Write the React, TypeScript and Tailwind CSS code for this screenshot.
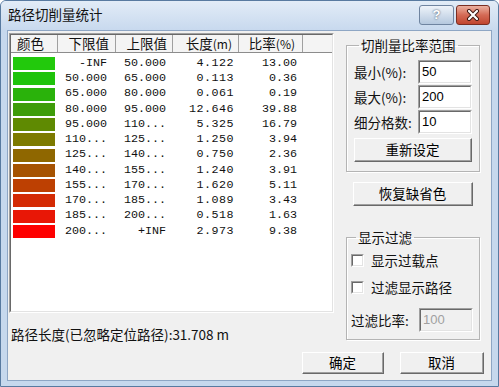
const rows = [
  { c: "#22c90c", lo: "  -INF", hi: "50.000", len: "4.122", pct: "13.00" },
  { c: "#1fc30b", lo: "50.000", hi: "65.000", len: "0.113", pct: "0.36" },
  { c: "#2ab20b", lo: "65.000", hi: "80.000", len: "0.061", pct: "0.19" },
  { c: "#3f9c0a", lo: "80.000", hi: "95.000", len: "12.646", pct: "39.88" },
  { c: "#5f8a02", lo: "95.000", hi: "110...", len: "5.325", pct: "16.79" },
  { c: "#7d7a00", lo: "110...", hi: "125...", len: "1.250", pct: "3.94" },
  { c: "#8f6700", lo: "125...", hi: "140...", len: "0.750", pct: "2.36" },
  { c: "#a65302", lo: "140...", hi: "155...", len: "1.240", pct: "3.91" },
  { c: "#bd4002", lo: "155...", hi: "170...", len: "1.620", pct: "5.11" },
  { c: "#d42b04", lo: "170...", hi: "185...", len: "1.089", pct: "3.43" },
  { c: "#e81706", lo: "185...", hi: "200...", len: "0.518", pct: "1.63" },
  { c: "#fe0000", lo: "200...", hi: "  +INF", len: "2.973", pct: "9.38" },
];

function Button({ children, className = "" }: { children: React.ReactNode; className?: string }) {
  return (
    <div className={"border border-t-white border-l-white border-b-[#696969] border-r-[#696969] bg-[#f0f0f0] " + className}>
      <div className="h-full flex items-center justify-center border-b border-r border-[#a0a0a0] leading-none text-black">
        {children}
      </div>
    </div>
  );
}

function Field({ value, disabled = false }: { value: string; disabled?: boolean }) {
  return (
    <div className="border border-t-[#a0a0a0] border-l-[#a0a0a0] border-b-white border-r-white">
      <div
        className={
          "w-[52px] h-full flex items-center pl-[2px] border border-t-[#696969] border-l-[#696969] border-b-[#e3e3e3] border-r-[#e3e3e3] font-['Liberation_Sans',sans-serif] text-[13px] " +
          (disabled ? "bg-[#f0f0f0] text-[#a0a0a0]" : "bg-white text-black")
        }
      >
        {value}
      </div>
    </div>
  );
}

function Check({ label }: { label: string }) {
  return (
    <div className="flex items-center h-[22px] gap-[7px]">
      <div className="w-[13px] h-[13px] border border-t-[#a0a0a0] border-l-[#a0a0a0] border-b-white border-r-white">
        <div className="w-full h-full bg-white border border-t-[#696969] border-l-[#696969] border-b-[#e3e3e3] border-r-[#e3e3e3]" />
      </div>
      <span>{label}</span>
    </div>
  );
}

export default function App() {
  return (
    <div className="w-[499px] h-[387px] overflow-hidden flex flex-col bg-[#c6d8ed] border border-[#587aa0] rounded-t-[6px] font-['Noto_Sans_CJK_SC',sans-serif] text-[13.5px] text-[#111]">
      <div className="h-[29px] flex items-center pl-[7px] pr-[8px] bg-gradient-to-b from-[#e2ecf7] to-[#c8d9ee]">
        <span className="flex-1 leading-none pb-[1px]">路径切削量统计</span>
        <div className="flex gap-[2px] self-start mt-[4px]">
          <div className="w-[35px] h-[20px] rounded-[3px] border border-[#6f84a0] bg-gradient-to-b from-[#eef3f9] to-[#b5c8de] flex items-center justify-center font-['Liberation_Sans',sans-serif] font-bold text-[13px] text-white [text-shadow:0_0_2px_#2c3d55]">
            ?
          </div>
          <div className="w-[34px] h-[20px] rounded-[3px] border border-[#7a2e22] bg-gradient-to-b from-[#eab0a0] via-[#d46a55] to-[#c0452f] flex items-center justify-center">
            <svg width="14" height="12" viewBox="0 0 14 12">
              <path d="M3 2 L11 10 M11 2 L3 10" stroke="#3a1510" strokeWidth="4" strokeLinecap="round" />
              <path d="M3 2 L11 10 M11 2 L3 10" stroke="#fff" strokeWidth="2.2" strokeLinecap="round" />
            </svg>
          </div>
        </div>
      </div>

      <div className="flex-1 mx-[6px] mb-[5px] border border-[#8ea6c4] bg-[#f0f0f0] flex flex-col pl-[1px] pr-[7px]">
        <div className="flex gap-[12px] pt-[2px]">
          <div className="w-[325px] flex flex-col">
            <div className="h-[280px] border border-t-[#a0a0a0] border-l-[#a0a0a0] border-b-white border-r-white">
              <div className="h-full bg-white border border-t-[#696969] border-l-[#696969] border-b-[#e3e3e3] border-r-[#e3e3e3] flex flex-col">
                <div className="flex h-[18px] bg-[#f4f4f4] border-b border-[#8c8c8c] leading-none">
                  <div className="w-[47px] flex items-center pl-[6px] border-r border-[#a0a0a0]">颜色</div>
                  <div className="w-[58px] flex items-center justify-end pr-[6px] border-r border-[#a0a0a0]">下限值</div>
                  <div className="w-[57px] flex items-center justify-end pr-[5px] border-r border-[#a0a0a0]">上限值</div>
                  <div className="w-[66px] flex items-center justify-end pr-[6px] border-r border-[#a0a0a0]">
                    长度<span className="text-[12px]">(m)</span>
                  </div>
                  <div className="w-[64px] flex items-center justify-end pr-[7px] border-r border-[#a0a0a0]">
                    比率<span className="text-[12px]">(%)</span>
                  </div>
                  <div className="flex-1" />
                </div>
                <div className="pt-[3px] font-['Liberation_Mono',monospace] text-[11.7px] whitespace-pre">
                  {rows.map((r) => (
                    <div key={r.lo} className="flex items-center h-[15.25px]">
                      <div className="w-[47px] pl-[2px]">
                        <div className="w-[42px] h-[13px]" style={{ backgroundColor: r.c }} />
                      </div>
                      <div className="w-[58px] pl-[7px]">{r.lo}</div>
                      <div className="w-[57px] pl-[8px]">{r.hi}</div>
                      <div className="w-[66px] text-right pr-[5px] tracking-[0.5px]">{r.len}</div>
                      <div className="w-[64px] text-right pr-[6px]">{r.pct}</div>
                    </div>
                  ))}
                </div>
              </div>
            </div>
            <div className="mt-[12px] ml-[2px] leading-[18px]">
              路径长度(已忽略定位路径):31.708 m
            </div>
          </div>

          <div className="w-[134px] flex flex-col pt-[3px]">
            <fieldset className="border border-[#b4b4b4] shadow-[inset_1px_1px_0_#fff,1px_1px_0_#fff] px-[7px] pb-[9px]">
              <legend className="ml-[5px] px-[2px] leading-[18px]">切削量比率范围</legend>
              <div className="flex flex-col gap-[5px] pt-[8px]">
                <div className="flex items-center justify-between h-[20px]">
                  <span>最小(%):</span>
                  <Field value="50" />
                </div>
                <div className="flex items-center justify-between h-[20px]">
                  <span>最大(%):</span>
                  <Field value="200" />
                </div>
                <div className="flex items-center justify-between h-[20px]">
                  <span>细分格数:</span>
                  <Field value="10" />
                </div>
              </div>
              <Button className="mt-[6px] h-[24px]">重新设定</Button>
            </fieldset>

            <Button className="mt-[10px] mx-[7px] h-[24px]">恢复缺省色</Button>

            <fieldset className="mt-[22px] border border-[#b4b4b4] shadow-[inset_1px_1px_0_#fff,1px_1px_0_#fff] pl-[4px] pr-[6px] pb-[8px]">
              <legend className="ml-[5px] px-[2px] leading-[18px]">显示过滤</legend>
              <div className="pt-[3px] flex flex-col gap-[5px]">
                <Check label="显示过载点" />
                <Check label="过滤显示路径" />
              </div>
              <div className="mt-[11px] flex items-center justify-between h-[22px]">
                <span>过滤比率:</span>
                <Field value="100" disabled />
              </div>
            </fieldset>
          </div>
        </div>

        <div className="mt-auto mb-[6px] flex justify-end gap-[16px]">
          <Button className="w-[82px] h-[22px] border-black">确定</Button>
          <Button className="w-[84px] h-[22px]">取消</Button>
        </div>
      </div>
    </div>
  );
}
